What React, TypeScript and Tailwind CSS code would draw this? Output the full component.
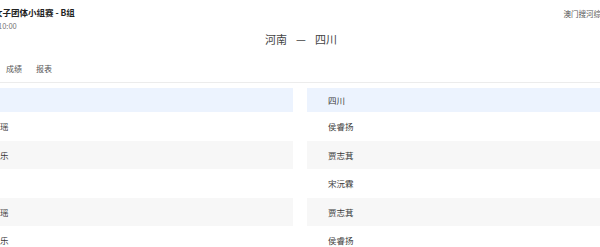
const font = {
  fontFamily: '"Noto Sans CJK SC", "Noto Sans", sans-serif',
};

type Row = { home: string; away: string };

const rows: Row[] = [
  { home: "河南", away: "四川" },
  { home: "石洵瑶", away: "侯睿扬" },
  { home: "范思乐", away: "贾志萁" },
  { home: "李国", away: "宋沅霖" },
  { home: "石洵瑶", away: "贾志萁" },
  { home: "范思乐", away: "侯睿扬" },
];

const rowBg = (i: number) => {
  if (i === 0) return "bg-[#ecf3fe] h-[24px]";
  if (i % 2 === 0) return "bg-[#f7f7f7] h-[28.5px]";
  return "bg-white h-[28.5px]";
};

const PlayerColumn = ({ side }: { side: "home" | "away" }) => (
  <div className="w-[331px] shrink-0 flex flex-col">
    {rows.map((r, i) => (
      <div
        key={i}
        className={`${rowBg(i)} flex items-center pl-[21px] text-[8.5px] leading-none text-[#3a3a3a]`}
      >
        {r[side]}
      </div>
    ))}
  </div>
);

const App = () => {
  return (
    <div
      className="w-[600px] h-[247px] overflow-hidden bg-white relative"
      style={font}
    >
      <div className="flex justify-between items-start pt-[7px]">
        <div className="ml-[-6px] text-[8.5px] leading-[11px] font-bold text-[#222] whitespace-nowrap">
          女子团体小组赛 - B组
        </div>
        <div className="mr-[-31px] mt-[2px] text-[7.5px] leading-[10px] text-[#555] whitespace-nowrap">
          澳门搜河综合体育馆
        </div>
      </div>
      <div className="ml-[-2px] mt-[2px] text-[7.5px] leading-[10px] text-[#777]">
        10:00
      </div>
      <div className="mt-[1px] flex justify-center gap-[9px] text-[11px] leading-[14px] text-[#444] pl-[2px]">
        <span>河南</span>
        <span>—</span>
        <span>四川</span>
      </div>
      <div className="mt-[18px] ml-[-24px] flex gap-[14px] text-[8px] leading-[10px] text-[#555]">
        <span>对阵</span>
        <span>成绩</span>
        <span>报表</span>
      </div>
      <div className="mt-[8px] h-px bg-[#ececec]" />
      <div className="mt-[5px] ml-[-38px] flex gap-[14px]">
        <PlayerColumn side="home" />
        <PlayerColumn side="away" />
      </div>
    </div>
  );
};

export default App;
